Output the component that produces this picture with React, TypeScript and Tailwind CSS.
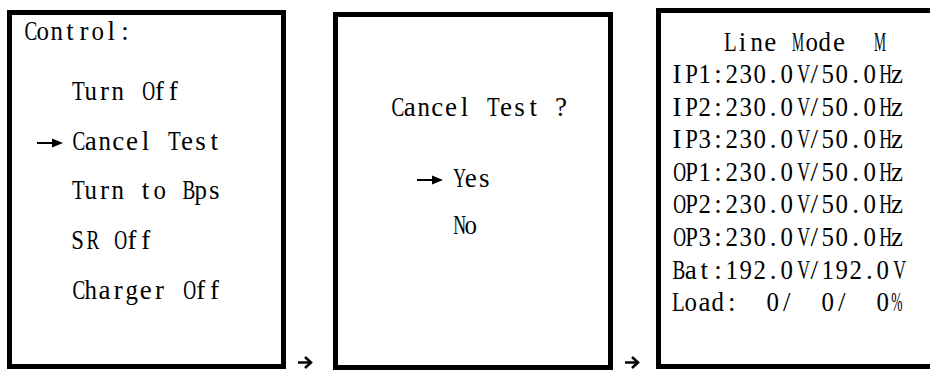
import React from "react";

const serif = { fontFamily: '"Liberation Serif", "Times New Roman", serif' };

/* condense wide serif glyphs so that each one fits its fixed-pitch cell, like SimSun's half-width Latin */
function scaleClass(c: string): string {
  if (c === "M") return "inline-block scale-x-[0.5] tracking-[-10px] -translate-x-[2.5px]";
  if (c === "%") return "inline-block scale-x-[0.5] tracking-[-9px] -translate-x-[2.25px]";
  if ("W".includes(c)) return "inline-block scale-x-[0.5]";
  if ("mw".includes(c)) return "inline-block scale-x-[0.6]";
  if ("HOVYNDAUXQGK".includes(c)) return "inline-block scale-x-[0.66]";
  if ("CBR".includes(c)) return "inline-block scale-x-[0.71]";
  if ("TLEZF".includes(c)) return "inline-block scale-x-[0.77]";
  if ("PS".includes(c)) return "inline-block scale-x-[0.84]";
  if ("0123456789nopdbghukvxyq".includes(c)) return "inline-block scale-x-[0.92]";
  return "inline-block";
}

function T({ s }: { s: string }) {
  return (
    <>
      {Array.from(s).map((c, i) => (
        <span key={i} className="inline-block w-[13.75px] text-center">
          <span className={scaleClass(c)}>{c === " " ? "\u00a0" : c}</span>
        </span>
      ))}
    </>
  );
}

function SelArrow() {
  return (
    <svg width="26" height="12" viewBox="0 0 26 12" className="block">
      <line x1="0" y1="6" x2="17" y2="6" stroke="#000" strokeWidth="2" />
      <polygon points="15,1.5 26,6 15,10.5" fill="#000" />
    </svg>
  );
}

function FlowArrow() {
  return (
    <svg width="15" height="13" viewBox="0 0 15 13" className="block">
      <line x1="0" y1="6.5" x2="13" y2="6.5" stroke="#000" strokeWidth="2.5" />
      <polyline points="7,1 13,6.5 7,12" fill="none" stroke="#000" strokeWidth="2.5" />
    </svg>
  );
}

function MenuRow({ text, selected }: { text: string; selected?: boolean }) {
  return (
    <div className="flex items-center h-[49.75px]">
      <div className="w-[33px] h-[49.75px] flex items-center pt-[3px]">{selected ? <SelArrow /> : null}</div>
      <div className="whitespace-nowrap leading-[49.75px]">
        <T s={text} />
      </div>
    </div>
  );
}

export default function App() {
  const lines = [
    "IP1:230.0V/50.0Hz",
    "IP2:230.0V/50.0Hz",
    "IP3:230.0V/50.0Hz",
    "OP1:230.0V/50.0Hz",
    "OP2:230.0V/50.0Hz",
    "OP3:230.0V/50.0Hz",
    "Bat:192.0V/192.0V",
    "Load:  0/  0/  0%",
  ];
  return (
    <div
      className="w-[930px] h-[374px] overflow-hidden bg-white text-black flex items-start pl-[7px] text-[27px]"
      style={serif}
    >
      {/* Box 1 */}
      <div className="mt-[10px] w-[279px] h-[359px] border-[5px] border-black shrink-0">
        <div className="pl-[10px] leading-[32px] whitespace-nowrap">
          <T s="Control:" />
        </div>
        <div className="mt-[19.9px] pl-[25px] flex flex-col">
          <MenuRow text="Turn Off" />
          <MenuRow text="Cancel Test" selected />
          <MenuRow text="Turn to Bps" />
          <MenuRow text="SR Off" />
          <MenuRow text="Charger Off" />
        </div>
      </div>

      {/* arrow 1 */}
      <div className="w-[47px] h-[371px] shrink-0 flex items-end pl-[12px] pb-[2px]">
        <FlowArrow />
      </div>

      {/* Box 2 */}
      <div className="mt-[12px] w-[280px] h-[358px] border-[5px] border-black shrink-0">
        <div className="mt-[71.8px] pl-[51px] leading-[36px] whitespace-nowrap">
          <T s="Cancel Test ?" />
        </div>
        <div className="mt-[30.5px] pl-[79px] flex flex-col">
          <div className="flex items-center h-[47px]">
            <div className="w-[33px] flex items-center pt-[3px]">
              <SelArrow />
            </div>
            <div className="leading-[47px] whitespace-nowrap">
              <T s="Yes" />
            </div>
          </div>
          <div className="flex items-center h-[47px]">
            <div className="w-[33px]" />
            <div className="leading-[47px] whitespace-nowrap">
              <T s="No" />
            </div>
          </div>
        </div>
      </div>

      {/* arrow 2 */}
      <div className="w-[43px] h-[371px] shrink-0 flex items-end pl-[12px] pb-[2px]">
        <FlowArrow />
      </div>

      {/* Box 3 */}
      <div className="mt-[8px] w-[300px] h-[361px] border-[5px] border-black shrink-0">
        <div className="mt-[12.5px] pl-[9px] flex flex-col">
          <div className="leading-[32.6px] whitespace-nowrap pl-[52px]">
            <T s="Line Mode  M" />
          </div>
          {lines.map((l) => (
            <div key={l} className="leading-[32.6px] whitespace-nowrap">
              <T s={l} />
            </div>
          ))}
        </div>
      </div>
    </div>
  );
}
